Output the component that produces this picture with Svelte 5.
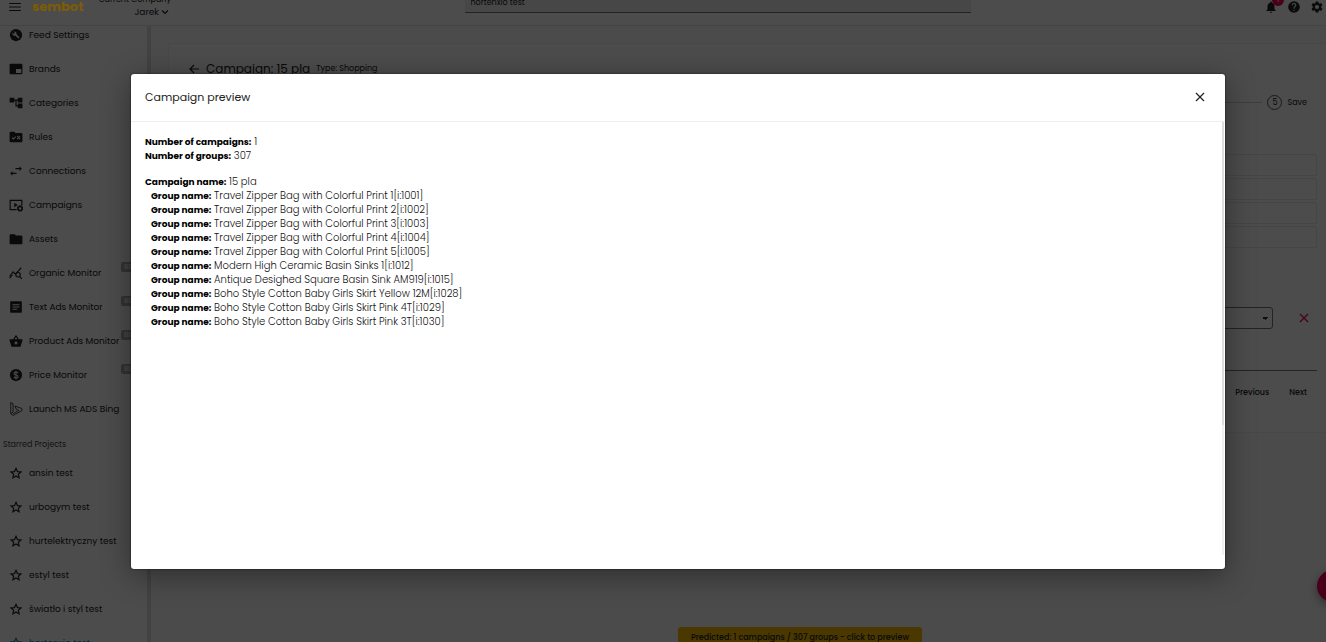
<script>
  const navItems = [
    { label: 'Feed Settings', icon: 'wrench' },
    { label: 'Brands', icon: 'brands' },
    { label: 'Categories', icon: 'tree' },
    { label: 'Rules', icon: 'rules' },
    { label: 'Connections', icon: 'swap' },
    { label: 'Campaigns', icon: 'campaigns' },
    { label: 'Assets', icon: 'folder' },
    { label: 'Organic Monitor', icon: 'organic', beta: true },
    { label: 'Text Ads Monitor', icon: 'article', beta: true },
    { label: 'Product Ads Monitor', icon: 'basket', beta: true },
    { label: 'Price Monitor', icon: 'dollar', beta: true },
    { label: 'Launch MS ADS Bing', icon: 'bing' }
  ];

  const starred = [
    'ansin test',
    'urbogym test',
    'hurtelektryczny test',
    'estyl test',
    'światło i styl test',
    'hortenxio test'
  ];

  const groups = [
    'Travel Zipper Bag with Colorful Print 1[i:1001]',
    'Travel Zipper Bag with Colorful Print 2[i:1002]',
    'Travel Zipper Bag with Colorful Print 3[i:1003]',
    'Travel Zipper Bag with Colorful Print 4[i:1004]',
    'Travel Zipper Bag with Colorful Print 5[i:1005]',
    'Modern High Ceramic Basin Sinks 1[i:1012]',
    'Antique Desighed Square Basin Sink AM919[i:1015]',
    'Boho Style Cotton Baby Girls Skirt Yellow 12M[i:1028]',
    'Boho Style Cotton Baby Girls Skirt Pink 4T[i:1029]',
    'Boho Style Cotton Baby Girls Skirt Pink 3T[i:1030]'
  ];

  let project = $state('hortenxio test');
  let current = $state('hortenxio test');
  let fields = $state(['', '', '', '']);
  let open = $state(true);
</script>

<div class="app">
  <header class="topbar">
    <button class="icon-btn" aria-label="Menu">
      <svg width="14" height="14" viewBox="0 0 24 24"><path d="M2 5h20v2H2zM2 11h20v2H2zM2 17h20v2H2z" /></svg>
    </button>
    <a class="logo" href="#home">sembot</a>
    <div class="company">
      <span>Current Company</span>
      <button class="company-btn">
        Jarek
        <svg width="8" height="8" viewBox="0 0 8 8"><path class="line" d="M1 2.500l3 3 3-3" /></svg>
      </button>
    </div>
    <input class="search" aria-label="Project" bind:value={project} />
    <div class="tools">
      <button class="icon-btn bell" aria-label="Notifications">
        <svg width="14" height="14" viewBox="0 0 24 24"><path d="M12 22c1.100 0 2-.9 2-2h-4c0 1.100.9 2 2 2zm6-6v-5c0-3.070-1.640-5.640-4.500-6.320V4a1.500 1.500 0 0 0-3 0v.68C7.630 5.360 6 7.920 6 11v5l-2 2v1h16v-1l-2-2z" /></svg>
        <span class="count">1</span>
      </button>
      <button class="icon-btn" aria-label="Help">
        <svg width="14" height="14" viewBox="0 0 24 24"><path d="M12 2a10 10 0 1 0 0 20 10 10 0 0 0 0-20zm1 17h-2v-2h2v2zm2.070-7.750l-.9.920C13.450 12.900 13 13.500 13 15h-2v-.5c0-1.100.45-2.100 1.170-2.830l1.240-1.260A2 2 0 1 0 10 9H8a4 4 0 1 1 8 0c0 .88-.36 1.680-.93 2.250z" /></svg>
      </button>
      <button class="icon-btn" aria-label="Settings">
        <svg width="14" height="14" viewBox="0 0 24 24"><path d="M19.140 12.940a7 7 0 0 0 0-1.880l2.030-1.580a.5.5 0 0 0 .12-.61l-1.920-3.320a.5.5 0 0 0-.59-.22l-2.390.96a7 7 0 0 0-1.620-.94l-.36-2.540a.5.5 0 0 0-.48-.41h-3.840a.5.5 0 0 0-.47.41l-.36 2.540a7 7 0 0 0-1.620.94l-2.390-.96a.5.5 0 0 0-.59.22L2.740 8.870a.5.5 0 0 0 .12.61l2.030 1.580a7 7 0 0 0 0 1.880l-2.030 1.580a.5.5 0 0 0-.12.61l1.920 3.320c.12.220.37.290.59.220l2.390-.96c.5.380 1.030.7 1.620.94l.36 2.540c.05.240.24.410.48.410h3.840c.24 0 .44-.17.470-.41l.36-2.540a7 7 0 0 0 1.620-.94l2.390.96c.22.080.47 0 .59-.22l1.920-3.320a.5.5 0 0 0-.12-.61zM12 15.600a3.600 3.600 0 1 1 0-7.200 3.600 3.600 0 0 1 0 7.200z" /></svg>
      </button>
    </div>
  </header>

  <div class="layout">
    <nav class="sidebar">
      {#each navItems as item (item.label)}
        <a class="nav-item" href="#nav">
          <svg width="14" height="14" viewBox="0 0 24 24">
            {#if item.icon === 'wrench'}
              <circle cx="12" cy="12" r="10.500" />
              <path class="cut" d="M18 16l-5.200-5.200a3.800 3.800 0 0 0-5-4.700l2.500 2.500-1.800 1.800L6 7.900a3.800 3.800 0 0 0 4.800 5L16 18z" />
            {:else if item.icon === 'brands'}
              <path fill-rule="evenodd" d="M3 3h18q2 0 2 2v14q0 2-2 2H3q-2 0-2-2V5q0-2 2-2zm9 9v7h9v-7z" />
            {:else if item.icon === 'tree'}
              <path d="M23 11V3h-8v3H9V3H1v8h8V8h2v10h4v3h8v-8h-8v3h-2V8h2v3z" />
            {:else if item.icon === 'rules'}
              <path d="M1 5q0-2 2-2h6l2 2h10q2 0 2 2v12q0 2-2 2H3q-2 0-2-2z" />
              <path class="cut-line" d="M5 13l2.500 2.500 4-4M14 10.500l5 5M19 10.500l-5 5" />
            {:else if item.icon === 'swap'}
              <path d="M22 8l-4-4v3h-7v2h7v3zM6 12l-4 4 4 4v-3h7v-2H6z" />
            {:else if item.icon === 'campaigns'}
              <path class="line" d="M13 20H2V4h20v9" />
              <path d="M9 8v8l6-4z" />
              <circle cx="19" cy="18" r="3.500" class="gear" />
              <path class="line" stroke-dasharray="2 1.500" d="M19 13.500a4.500 4.500 0 1 0 .1 0" />
            {:else if item.icon === 'folder'}
              <path d="M10 4H3q-2 0-2 2v13q0 2 2 2h18q2 0 2-2V8q0-2-2-2h-9z" />
            {:else if item.icon === 'organic'}
              <path class="line" d="M1 18l6-8 4 4L21 3" />
              <circle class="line" cx="15.500" cy="15" r="3.800" />
              <path class="line" d="M18 18l4 4M1 21l5-6" />
            {:else if item.icon === 'article'}
              <path d="M4 2h16q2 0 2 2v16q0 2-2 2H4q-2 0-2-2V4q0-2 2-2z" />
              <path class="cut-line" d="M6 8h12M6 12h12M6 16h8" />
            {:else if item.icon === 'basket'}
              <path fill-rule="evenodd" d="M17 9l-4.500-7h-1L7 9H1v2l3 10q.4 1 1.500 1h13q1.100 0 1.500-1l3-10V9zM9.500 9L12 5l2.500 4zM12 18a2.500 2.500 0 1 1 0-5 2.500 2.500 0 0 1 0 5z" />
            {:else if item.icon === 'dollar'}
              <circle cx="12" cy="12" r="10.500" />
              <path class="cut-line" d="M12 4.500v15M15.500 8.500Q14 7 12 7q-3.300 0-3.300 2.400T12 12q3.500.3 3.500 2.800T12 17.200Q9.500 17 8.300 15.300" />
            {:else}
              <path class="thin" d="M3 1l4 2v14l-4 3zM3 20l4 3 15-8v-4L10 7l3 6 4 1.500L7 20" />
            {/if}
          </svg>
          {item.label}
          {#if item.beta}<span class="beta">BETA</span>{/if}
        </a>
      {/each}

      <p class="nav-title">Starred Projects</p>

      {#each starred as name (name)}
        <a class="nav-item" class:active={name === current} href="#project" onclick={() => (current = name)}>
          <svg width="14" height="14" viewBox="0 0 24 24">
            <path class="line" d="M12 4l2.500 5.600 6 .6-4.500 4 1.300 5.900-5.300-3.100-5.300 3.100L8 14.200l-4.500-4 6-.6z" />
          </svg>
          {name}
        </a>
      {/each}
    </nav>

    <main class="main">
      <section class="card">
        <div class="heading">
          <button class="icon-btn" aria-label="Back">
            <svg width="12" height="12" viewBox="0 0 12 12"><path class="line" d="M11 6H2M6 2L2 6l4 4" /></svg>
          </button>
          <h1>Campaign: 15 pla</h1>
          <span>Type: Shopping</span>
        </div>
        <div class="stepper">
          <hr />
          <span class="step">5</span>
          <span>Save</span>
        </div>
        <div class="fields">
          {#each fields as _, i}
            <input aria-label="Rule {i + 1}" bind:value={fields[i]} />
          {/each}
        </div>
        <div class="condition">
          <select aria-label="Condition"><option></option></select>
          <button class="icon-btn remove" aria-label="Remove">
            <svg width="10" height="10" viewBox="0 0 10 10"><path class="line" d="M1 1l8 8M9 1L1 9" /></svg>
          </button>
        </div>
        <footer class="actions">
          <button>Previous</button>
          <button>Next</button>
        </footer>
      </section>
    </main>
  </div>

  <button class="predicted" onclick={() => (open = true)}>Predicted: 1 campaigns / 307 groups - click to preview</button>
  <button class="fab" aria-label="Chat"></button>

  {#if open}
    <div class="backdrop">
      <div class="dialog" role="dialog" aria-modal="true" aria-labelledby="dialog-title">
        <div class="dialog-header">
          <h2 id="dialog-title">Campaign preview</h2>
          <button class="icon-btn" aria-label="Close" onclick={() => (open = false)}>
            <svg width="10" height="10" viewBox="0 0 10 10"><path class="line" d="M1 1l8 8M9 1L1 9" /></svg>
          </button>
        </div>
        <div class="dialog-body">
          <div class="dialog-content">
            <p><b>Number of campaigns:</b> 1</p>
            <p><b>Number of groups:</b> 307</p>
            <p class="campaign"><b>Campaign name:</b> 15 pla</p>
            <ul>
              {#each groups as group}
                <li><b>Group name:</b> {group}</li>
              {/each}
            </ul>
          </div>
          <div class="track"><div class="thumb"></div></div>
        </div>
      </div>
    </div>
  {/if}
</div>

<style>
  :global(body) {
    margin: 0;
  }

  .app {
    position: relative;
    height: 100vh;
    display: flex;
    flex-direction: column;
    overflow: hidden;
    background: #fafafa;
    color: #222;
    font-family: Poppins, Inter, sans-serif;
    font-size: 9px;
    line-height: 14px;
  }

  button,
  input,
  select {
    font: inherit;
    color: inherit;
    margin: 0;
  }

  button {
    padding: 0;
    border: none;
    background: none;
    cursor: pointer;
  }

  a {
    color: inherit;
    text-decoration: none;
  }

  p,
  h1,
  h2,
  ul {
    margin: 0;
    padding: 0;
    list-style: none;
  }

  svg {
    display: block;
    flex: none;
    fill: currentColor;
  }

  .line {
    fill: none;
    stroke: currentColor;
    stroke-width: 2;
  }

  svg[viewBox='0 0 8 8'] .line,
  svg[viewBox='0 0 10 10'] .line,
  svg[viewBox='0 0 12 12'] .line {
    stroke-width: 1.2;
  }

  .thin {
    fill: none;
    stroke: currentColor;
    stroke-width: 1.4;
  }

  .cut {
    fill: #fff;
  }

  .cut-line {
    fill: none;
    stroke: #fff;
    stroke-width: 1.8;
  }

  .gear {
    fill: none;
    stroke: currentColor;
    stroke-width: 2.6;
  }

  .icon-btn {
    display: flex;
    align-items: center;
    justify-content: center;
  }

  .topbar {
    flex: none;
    height: 25px;
    display: flex;
    align-items: flex-start;
    padding: 0 2px 0 8px;
    border-bottom: 1px solid #e4e4e4;
    background: #fff;
  }

  .logo {
    z-index: 2;
    width: 52px;
    margin-left: 10px;
    color: #7c5c06;
    font-size: 13px;
    font-weight: 700;
  }

  .company {
    width: 87px;
    display: flex;
    flex-direction: column;
    align-items: flex-end;
    line-height: 12px;
    margin-top: -6px;
    font-size: 8px;
  }

  .company-btn {
    display: flex;
    align-items: center;
    gap: 2px;
    margin-right: 2px;
    font-size: 9px;
    line-height: 12px;
  }

  .search {
    box-sizing: border-box;
    width: 506px;
    height: 13px;
    margin: 0 auto;
    padding: 0 6px 6px;
    border: none;
    border-bottom: 1px solid #777;
    background: #eee;
    font-size: 8px;
    line-height: 6px;
  }

  .tools {
    display: flex;
    gap: 9px;
  }

  .bell {
    position: relative;
  }

  .count {
    position: absolute;
    top: -6px;
    right: -6px;
    width: 12px;
    height: 12px;
    border-radius: 50%;
    background: #f50057;
    color: #fff;
    font-size: 8px;
    line-height: 12px;
  }

  .layout {
    flex: 1;
    min-height: 0;
    display: flex;
  }

  .sidebar {
    flex: none;
    width: 147px;
    display: flex;
    flex-direction: column;
    overflow: hidden;
    border-right: 4px solid #dcdcdc;
    background: #fff;
    white-space: nowrap;
  }

  .nav-item {
    flex: none;
    position: relative;
    display: flex;
    align-items: center;
    gap: 6px;
    height: 18px;
    margin-bottom: 16px;
    padding-left: 9px;
  }

  .nav-item.active {
    color: #0288b8;
  }

  .beta {
    position: absolute;
    top: -2px;
    left: 121px;
    padding: 0 3px;
    border-radius: 2px;
    background: #aaa;
    color: #eee;
    font-size: 7px;
    font-weight: 600;
    line-height: 10px;
  }

  .nav-title {
    padding: 4px 0 12px 3px;
    color: #444;
    font-size: 8px;
  }

  .main {
    flex: 1;
    min-width: 0;
    padding: 17px 0 0 17px;
  }

  .card {
    padding: 18px 9px 32px 19px;
    border: solid #f2f2f2;
    border-width: 1px 0 1px 1px;
    background: #fff;
  }

  .heading {
    display: flex;
    align-items: center;
    gap: 6px;
  }

  h1 {
    font-size: 12px;
    font-weight: 400;
  }

  .heading span {
    font-size: 8px;
  }

  .stepper {
    display: flex;
    align-items: center;
    gap: 5px;
    margin: 19px 10px 0 0;
    font-size: 8px;
  }

  .stepper hr {
    flex: 1;
    margin: 0;
    border: none;
    border-top: 1px solid #ccc;
  }

  .step {
    width: 13px;
    border: 1px solid #555;
    border-radius: 50%;
    line-height: 13px;
    text-align: center;
  }

  .fields {
    display: grid;
    gap: 2px;
    margin-top: 44px;
  }

  .fields input {
    box-sizing: border-box;
    width: 100%;
    height: 22px;
    border: 1px solid #e6e6e6;
    border-radius: 2px;
    background: #fff;
  }

  .condition {
    display: flex;
    align-items: center;
    gap: 26px;
    margin: 59px 8px 41px 0;
  }

  select {
    flex: 1;
    height: 22px;
    appearance: none;
    border: 1px solid #777;
    border-radius: 3px;
    background: linear-gradient(45deg, transparent 50%, #333 50%) right 7px center / 3px 3px no-repeat,
      linear-gradient(315deg, transparent 50%, #333 50%) right 4px center / 3px 3px no-repeat;
  }

  .remove {
    color: #e6004c;
  }

  .actions {
    display: flex;
    justify-content: flex-end;
    gap: 20px;
    padding: 15px 10px 0 0;
    border-top: 1px solid #777;
    font-size: 8px;
    font-weight: 500;
  }

  .predicted {
    position: absolute;
    left: 678px;
    top: 627px;
    width: 244px;
    height: 22px;
    border-radius: 3px;
    background: #f8bd00;
    font-size: 8px;
    font-weight: 500;
    white-space: nowrap;
  }

  .fab {
    position: absolute;
    right: -23px;
    bottom: 40px;
    width: 32px;
    height: 32px;
    border-radius: 50%;
    background: #f00058;
    box-shadow: 0 3px 8px rgba(0, 0, 0, 0.4);
  }

  .backdrop {
    position: absolute;
    inset: 0;
    z-index: 1;
    display: flex;
    padding: 74px 101px 73px 131px;
    background: rgba(0, 0, 0, 0.7);
  }

  .dialog {
    flex: 1;
    display: flex;
    flex-direction: column;
    padding-bottom: 14px;
    border-radius: 3px;
    background: #fff;
    box-shadow: 0 0 2px rgba(0, 0, 0, 0.7), 0 6px 30px rgba(0, 0, 0, 0.4);
  }

  .dialog-header {
    display: flex;
    align-items: center;
    justify-content: space-between;
    height: 45px;
    padding: 0 20px 2px 14px;
    border-bottom: 1px solid #eee;
  }

  h2 {
    font-size: 11px;
    font-weight: 400;
  }

  .dialog-body {
    flex: 1;
    display: flex;
    padding-right: 1px;
  }

  .dialog-content {
    flex: 1;
    padding: 13px 14px;
    font-size: 10px;
    font-weight: 300;
    color: #111;
  }

  b {
    color: #000;
    font-size: 9px;
    font-weight: 700;
  }

  .campaign {
    margin-top: 12px;
  }

  li {
    padding-left: 6px;
  }

  .track {
    width: 2px;
    background: #f0f0f0;
  }

  .thumb {
    height: 70%;
    background: #ddd;
  }
</style>
